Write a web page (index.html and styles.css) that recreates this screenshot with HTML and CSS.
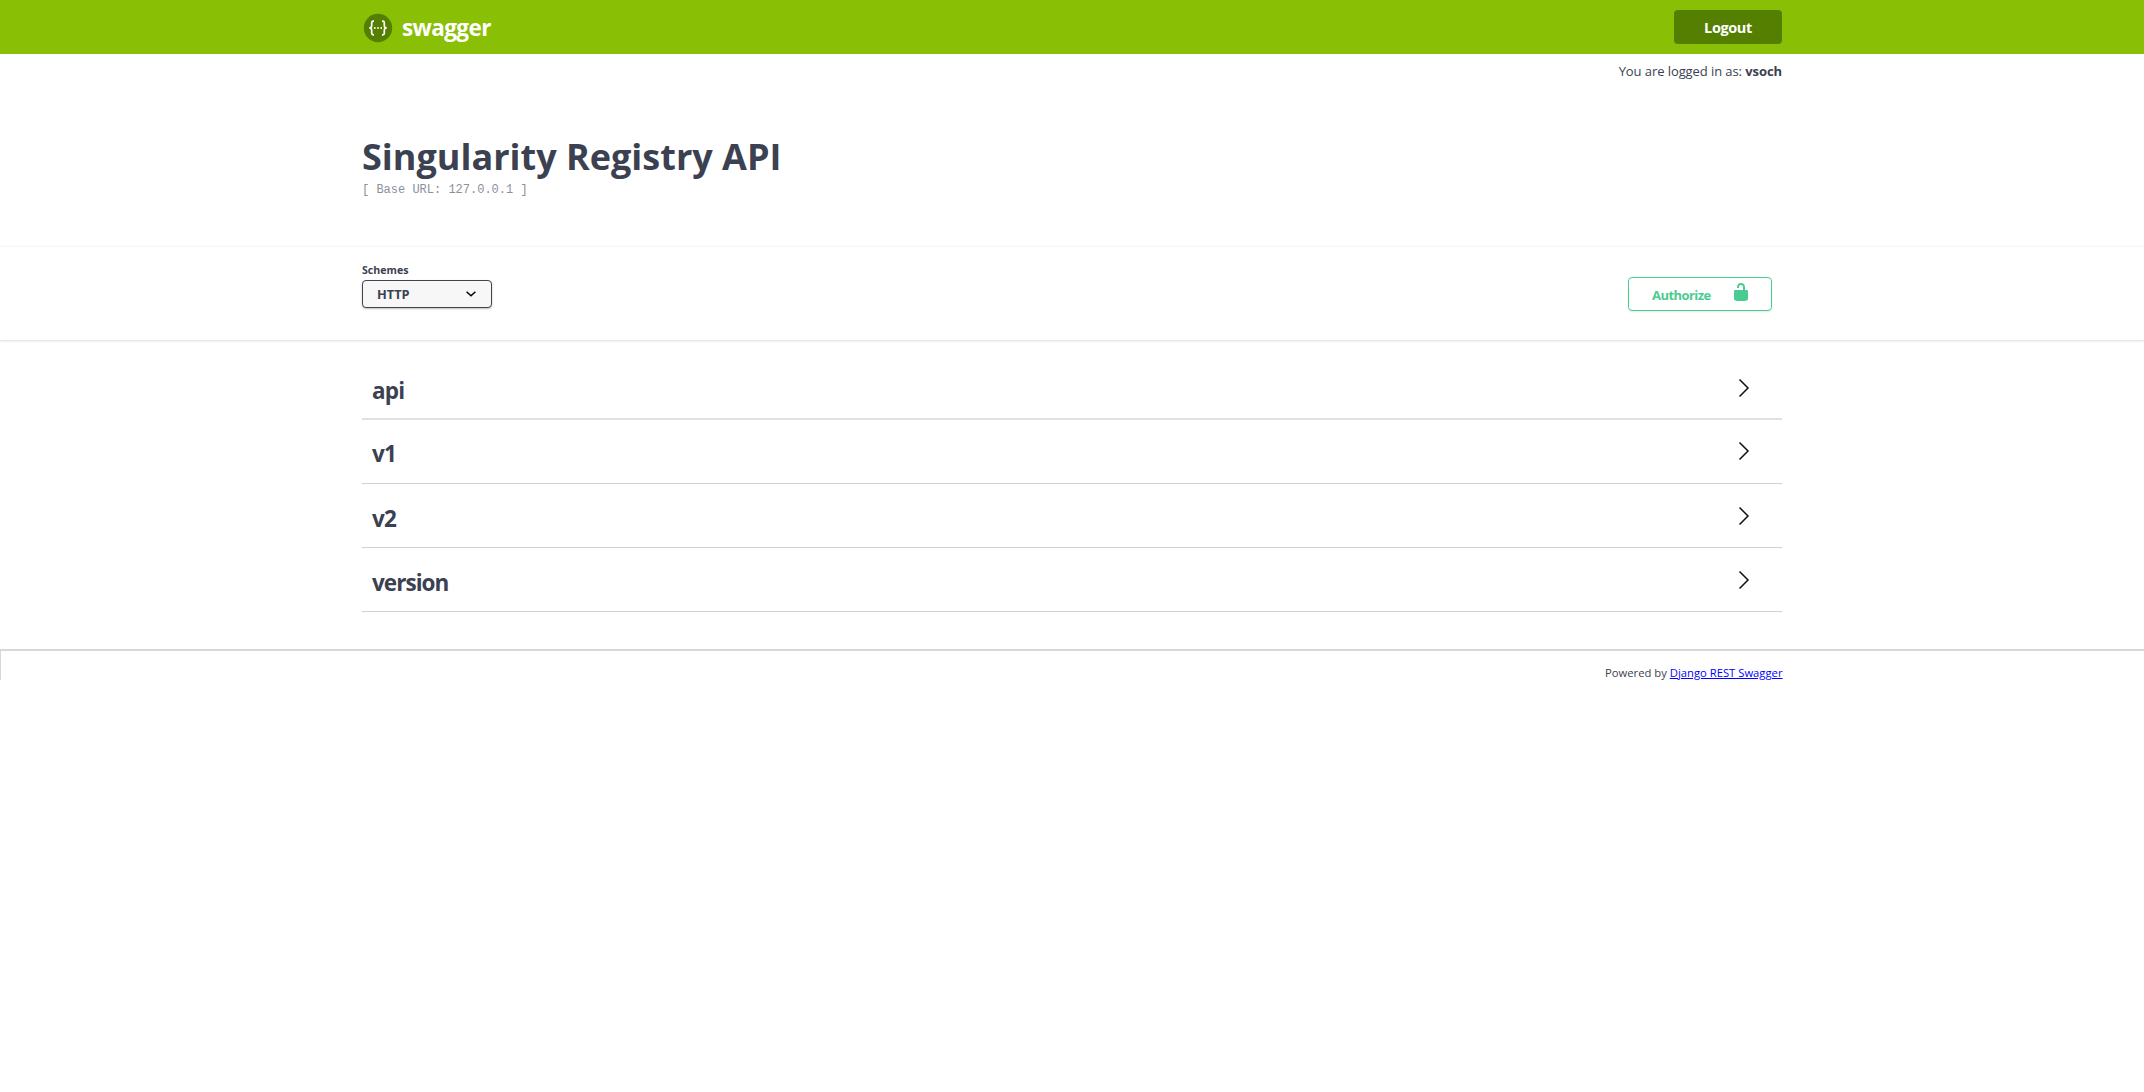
FILE: index.html
```html
<!DOCTYPE html>
<html lang="en">
<head>
<meta charset="utf-8">
<title>Singularity Registry API</title>
<link rel="stylesheet" href="styles.css">
</head>
<body>
<header class="topbar">
  <div class="wrapper topbar-inner">
    <a class="brand">
      <svg class="logo" width="30" height="30" viewBox="0 0 30 30"><circle cx="15" cy="15" r="14.2" fill="#547f00"/><g fill="none" stroke="#fff" stroke-width="1.7"><path d="M11 8.200H10.300Q8.700 8.200 8.700 9.800V12.800Q8.700 15 6.200 15Q8.700 15 8.700 17.200V20.200Q8.700 21.800 10.300 21.800H11"/><path d="M19 8.200H19.700Q21.300 8.200 21.300 9.800V12.800Q21.300 15 23.800 15Q21.300 15 21.300 17.200V20.200Q21.300 21.800 19.700 21.800H19"/></g><g fill="#fff"><circle cx="11.800" cy="15" r="0.950"/><circle cx="15" cy="15" r="0.950"/><circle cx="18.200" cy="15" r="0.950"/></g></svg>
      <span class="brand-name">swagger</span>
    </a>
    <a class="logout">Logout</a>
  </div>
</header>
<div class="wrapper user">You are logged in as: <b>vsoch</b></div>
<section class="wrapper info">
  <h1 class="title">Singularity Registry API</h1>
  <pre class="base-url">[ Base URL: 127.0.0.1 ]</pre>
</section>
<section class="schemes">
  <div class="wrapper schemes-inner">
    <div class="scheme">
      <span class="scheme-label">Schemes</span>
      <div class="select"><span>HTTP</span><svg width="20" height="20" viewBox="0 0 20 20"><path d="M5.600 7.800l4.400 4 4.400-4" fill="none" stroke="#000" stroke-width="1.500"/></svg></div>
    </div>
    <button class="authorize"><span>Authorize</span><svg width="20" height="20" viewBox="0 0 20 20"><path d="M15.8 8H14V5.6C14 2.703 12.665 1 10 1 7.334 1 6 2.703 6 5.6V6h2v-.801C8 3.754 8.797 3 10 3c1.203 0 2 .754 2 2.199V8H4c-.553 0-1 .646-1 1.199V17c0 .549.428 1.139.951 1.307l1.197.387C5.672 18.861 6.55 19 7.1 19h5.8c.549 0 1.428-.139 1.951-.307l1.196-.387c.524-.167.953-.757.953-1.306V9.199C17 8.646 16.352 8 15.8 8z" fill="#49cc90"/></svg></button>
  </div>
</section>
<main class="wrapper tags">
  <div class="tag first"><h4>api</h4><svg class="arrow" width="20" height="20" viewBox="0 0 20 20"><path d="M5.5 1.5L14 10l-8.500 8.500" fill="none" stroke="#111" stroke-width="1.500"/></svg></div>
  <div class="tag second"><h4>v1</h4><svg class="arrow" width="20" height="20" viewBox="0 0 20 20"><path d="M5.5 1.5L14 10l-8.500 8.500" fill="none" stroke="#111" stroke-width="1.500"/></svg></div>
  <div class="tag"><h4>v2</h4><svg class="arrow" width="20" height="20" viewBox="0 0 20 20"><path d="M5.5 1.5L14 10l-8.500 8.500" fill="none" stroke="#111" stroke-width="1.500"/></svg></div>
  <div class="tag"><h4 class="long">version</h4><svg class="arrow" width="20" height="20" viewBox="0 0 20 20"><path d="M5.5 1.5L14 10l-8.500 8.500" fill="none" stroke="#111" stroke-width="1.500"/></svg></div>
</main>
<footer class="footer"><div class="wrapper powered">Powered by <a href="#">Django REST Swagger</a></div></footer>
</body>
</html>
```
FILE: styles.css
```css
* { box-sizing: border-box; }
body { margin: 0; background: #fff; color: #3b4151; font-family: "Open Sans", sans-serif; }
.wrapper { width: 1420px; margin: 0 auto; }
.topbar { height: 54px; background: #89bf04; }
.topbar-inner { height: 54px; display: flex; align-items: center; justify-content: space-between; }
.brand { display: flex; align-items: center; gap: 9px; padding-top: 1px; color: #fff; }
.logo { margin-left: 1px; }
.brand-name { padding-top: 1px; font-size: 22.500px; font-weight: 700; line-height: 30px; letter-spacing: -0.6px; }
.logout { width: 108px; height: 34px; border-radius: 4px; background: #547f00; color: #fff; font-size: 14.500px; font-weight: 700; line-height: 36px; letter-spacing: -0.4px; text-align: center; }
.user { height: 34px; padding-top: 8px; font-size: 13px; line-height: 18px; letter-spacing: -0.08px; text-align: right; }
.info { height: 158px; padding-top: 44px; }
.title { margin: 0; font-size: 36px; font-weight: 700; line-height: 49px; }
.base-url { margin: 0; padding-top: 1px; font-family: "Liberation Mono", monospace; font-size: 12px; line-height: 16px; color: #8b909b; }
.schemes { height: 94px; border-top: 1px solid #f6f6f6; box-shadow: 0 1px 2px rgba(0,0,0,.15); }
.schemes-inner { display: flex; justify-content: space-between; padding: 16px 10px 0 0; }
.scheme { display: flex; flex-direction: column; }
.scheme-label { height: 17px; font-size: 10.600px; font-weight: 700; line-height: 14px; }
.select { width: 130px; height: 28px; display: flex; align-items: center; justify-content: space-between; padding: 0 10px 0 14px; border: 1px solid #41444e; border-radius: 4px; background: #f7f7f7; box-shadow: 0 1px 2px rgba(0,0,0,.25); font-size: 12.800px; font-weight: 700; }
.authorize { width: 144px; height: 34px; margin-top: 14px; display: flex; align-items: center; justify-content: space-between; padding: 0 20px 0 23px; border: 1px solid #49cc90; border-radius: 4px; background: transparent; box-shadow: 0 1px 2px rgba(0,0,0,.1); color: #49cc90; font: 700 13px "Open Sans", sans-serif; }
.authorize span { padding-top: 1px; letter-spacing: -0.55px; }
.authorize svg { margin-top: -4px; }
.tags { padding-top: 20px; }
.tag { height: 64px; display: flex; align-items: center; justify-content: space-between; padding: 0 28px 0 10px; border-bottom: 1px solid #cfd0d2; }
.tag.first { height: 60px; padding-bottom: 3px; border-bottom: 2px solid #e0e1e5; }
.tag.second { padding-bottom: 2px; }
.tag h4 { margin: 7px 0 0; font-size: 22.500px; font-weight: 700; line-height: 30px; letter-spacing: -0.8px; }
.tag .long { letter-spacing: -0.95px; }
.footer { height: 31px; margin-top: 37px; border-top: 2px solid #d8d8d8; border-left: 1px solid #d8d8d8; }
.powered { padding-top: 14px; font-size: 11.250px; line-height: 16px; text-align: right; }
.powered a { color: #00f; }
```
